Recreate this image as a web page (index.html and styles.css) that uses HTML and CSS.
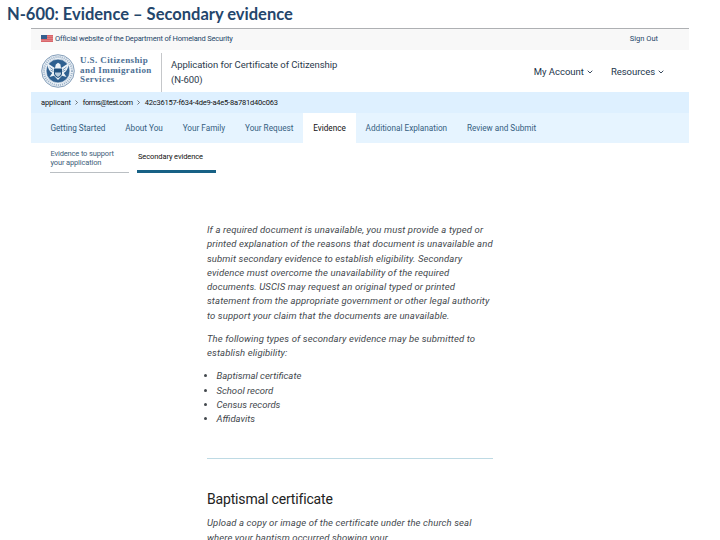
FILE: index.html
```html
<!DOCTYPE html>
<html lang="en">

<head>
    <meta charset="UTF-8">
    <meta name="viewport" content="width=device-width, initial-scale=1.0">
    <title>N-600: Evidence – Secondary evidence</title>
    <link rel="stylesheet" href="styles.css">
</head>

<body>
    <h1 class="slide-title">N-600: Evidence – Secondary evidence</h1>
    <div class="screen">
        <div class="banner">
            <svg class="flag" viewBox="0 0 12 7">
                <rect width="12" height="7" fill="#d9656a" />
                <path d="M0 1.5h12M0 3.5h12M0 5.5h12" stroke="#e79a9b" stroke-width="0.5" />
                <rect width="6" height="4" fill="#345f8f" />
            </svg>
            <span class="official">Official website of the Department of Homeland Security</span>
            <a class="sign-out">Sign Out</a>
        </div>

        <header class="header">
            <svg class="seal" viewBox="0 0 34 34">
                <circle cx="17" cy="17" r="16.3" fill="#e9eff5" stroke="#6989a9" stroke-width="0.8" />
                <circle cx="17" cy="17" r="14" fill="none" stroke="#9bb1c7" stroke-width="2" stroke-dasharray="1 1.1" />
                <circle cx="17" cy="17" r="11.9" fill="#2f6090" stroke="#fff" stroke-width="0.6" />
                <!-- eagle -->
                <path d="M6.500 9.500c2.500 1.200 5.500 3.500 7.500 4.500l.8-3.600 2.200-1.600 2.400 1.400.6 3.800c2-1 5-3.300 7.500-4.500 0 4.500-1.700 7.800-4.700 9.500l2.700 4-4.500-1.200-4 4.200-4-4.200-4.500 1.200 2.700-4C8.200 17.300 6.500 14 6.500 9.500z" fill="#edf3f8" />
                <path d="M13 14.500h8v4.700c0 2.600-2 4-4 4.800-2-.8-4-2.200-4-4.800z" fill="#21517f" />
                <path d="M14 18.500h6v1c0 1.600-1.500 2.700-3 3.400-1.500-.7-3-1.800-3-3.400z" fill="#b9ccdd" />
                <path d="M8.500 13l4 3M25.500 13l-4 3M9.500 16l3 1.500M24.500 16l-3 1.500" stroke="#2f6090" stroke-width="0.6" />
            </svg>
            <div class="agency">U.S. Citizenship<br>and Immigration<br>Services</div>
            <div class="form-name">Application for Certificate of Citizenship<br>(N-600)</div>
            <nav class="menu">
                <a class="account">My Account<svg class="chevron" viewBox="0 0 6 4"><path d="M0.700 0.700L3 3l2.300-2.300" /></svg></a>
                <a class="resources">Resources<svg class="chevron" viewBox="0 0 6 4"><path d="M0.700 0.700L3 3l2.300-2.300" /></svg></a>
            </nav>
        </header>

        <div class="breadcrumb">
            <span class="crumb">applicant</span>
            <svg class="sep" viewBox="0 0 3 5"><path d="M0.500 0.500l2 2-2 2" /></svg>
            <span class="crumb email">forms@test.com</span>
            <svg class="sep" viewBox="0 0 3 5"><path d="M0.500 0.500l2 2-2 2" /></svg>
            <span class="crumb case-id">42c36157-f634-4de9-a4e5-8a781d40c063</span>
        </div>

        <nav class="tabs">
            <a class="tab">Getting Started</a>
            <a class="tab">About You</a>
            <a class="tab">Your Family</a>
            <a class="tab">Your Request</a>
            <a class="tab active">Evidence</a>
            <a class="tab">Additional Explanation</a>
            <a class="tab">Review and Submit</a>
        </nav>

        <nav class="subtabs">
            <a class="subtab">Evidence to support<br>your application</a>
            <a class="subtab current">Secondary evidence</a>
        </nav>

        <main class="content">
            <p>If a required document is unavailable, you must provide a typed or<br>
                printed explanation of the reasons that document is unavailable and<br>
                submit secondary evidence to establish eligibility. Secondary<br>
                evidence must overcome the unavailability of the required<br>
                documents. USCIS may request an original typed or printed<br>
                statement from the appropriate government or other legal authority<br>
                to support your claim that the documents are unavailable.</p>
            <p>The following types of secondary evidence may be submitted to<br>
                establish eligibility:</p>
            <ul>
                <li>Baptismal certificate</li>
                <li>School record</li>
                <li>Census records</li>
                <li>Affidavits</li>
            </ul>
            <hr>
            <h2>Baptismal certificate</h2>
            <p>Upload a copy or image of the certificate under the church seal<br>
                where your baptism occurred showing your</p>
        </main>
    </div>
</body>

</html>
```

FILE: styles.css
```css
* {
    box-sizing: border-box;
}

body {
    margin: 0;
    height: 540px;
    overflow: hidden;
    background-color: #fff;
    font-family: Roboto, "Liberation Sans", sans-serif;
    color: #333;
}

.slide-title {
    margin: 0;
    padding: 4px 0 0 7px;
    height: 28px;
    font-family: Lato, sans-serif;
    font-size: 16.5px;
    line-height: 20px;
    font-weight: 700;
    color: #24466c;
}

.screen {
    width: 658px;
    margin-left: 31px;
    border-top: 1px solid #aeb0b3;
}

.banner {
    display: flex;
    align-items: center;
    height: 21px;
    padding: 0 31px 2px 10px;
    background-color: #f8f8f8;
    font-size: 7.5px;
    color: #254668;
}

.official {
    letter-spacing: -0.19px;
}

.flag {
    width: 12px;
    height: 7px;
    margin-right: 2px;
}

.sign-out {
    margin-left: auto;
}

.header {
    display: flex;
    align-items: center;
    height: 42px;
    padding-left: 10px;
}

.seal {
    width: 34px;
    height: 34px;
}

.agency {
    width: 82px;
    height: 39px;
    margin-left: 5px;
    padding-top: 3px;
    border-right: 1px solid #c5c7ca;
    font-family: "Liberation Serif", serif;
    font-size: 9px;
    line-height: 9.6px;
    letter-spacing: 0.4px;
    font-weight: 700;
    color: #4d7094;
    align-self: flex-end;
    white-space: nowrap;
}

.form-name {
    margin-left: 9px;
    padding-top: 3px;
    font-size: 9.5px;
    line-height: 14.5px;
    letter-spacing: -0.05px;
    color: #2c3a4c;
}

.menu {
    display: flex;
    gap: 18px;
    margin-left: auto;
    padding: 1px 25px 0 0;
    font-size: 9.5px;
    color: #23364c;
}

.resources {
    letter-spacing: -0.05px;
}

.chevron {
    width: 6px;
    height: 4px;
    margin: 0 0 1px 3px;
    fill: none;
    stroke: #23364c;
    stroke-width: 0.9;
}

.breadcrumb {
    display: flex;
    align-items: center;
    height: 21px;
    padding-left: 10px;
    background-color: #def0ff;
    font-size: 7.5px;
    letter-spacing: -0.1px;
    color: #111;
}

.email {
    letter-spacing: -0.45px;
}

.case-id {
    letter-spacing: -0.2px;
}

.sep {
    width: 3px;
    height: 5px;
    margin: 0 4.5px;
    fill: none;
    stroke: #444;
    stroke-width: 0.7;
}

.tabs {
    display: flex;
    height: 30px;
    padding-left: 9.5px;
    background-color: #e6f4ff;
    font-size: 8.2px;
    line-height: 31px;
    color: #35607f;
}

.tab {
    padding: 0 9.9px;
    white-space: nowrap;
}

.tab.active {
    background-color: #fff;
    color: #111;
}

.subtabs {
    display: flex;
    gap: 8px;
    padding-left: 19px;
    height: 30px;
    font-size: 7.5px;
    line-height: 9px;
    letter-spacing: -0.15px;
    color: #40617a;
}

.subtab {
    width: 79px;
    padding: 6px 0 0 0.5px;
    border-bottom: 1px solid #babfc3;
    white-space: nowrap;
}

.subtab.current {
    padding: 9px 0 0 1px;
    border-bottom: 3px solid #176185;
    letter-spacing: -0.1px;
    color: #111;
}

.content {
    width: 286px;
    margin: 50px 0 0 176px;
    font-size: 9.5px;
    line-height: 14.25px;
    letter-spacing: 0.12px;
    font-style: italic;
    color: #43484d;
    white-space: nowrap;
}

.content p {
    margin: 0 0 9px;
}

.content ul {
    margin: 0;
    padding-left: 9.5px;
    letter-spacing: 0;
}

.content hr {
    margin: 32px 0 30px;
    border: 0;
    border-top: 1px solid #bedae4;
}

.content h2 {
    margin: 0 0 7px;
    font-size: 14px;
    line-height: 20px;
    letter-spacing: -0.17px;
    font-weight: 400;
    font-style: normal;
    color: #222;
}
```
